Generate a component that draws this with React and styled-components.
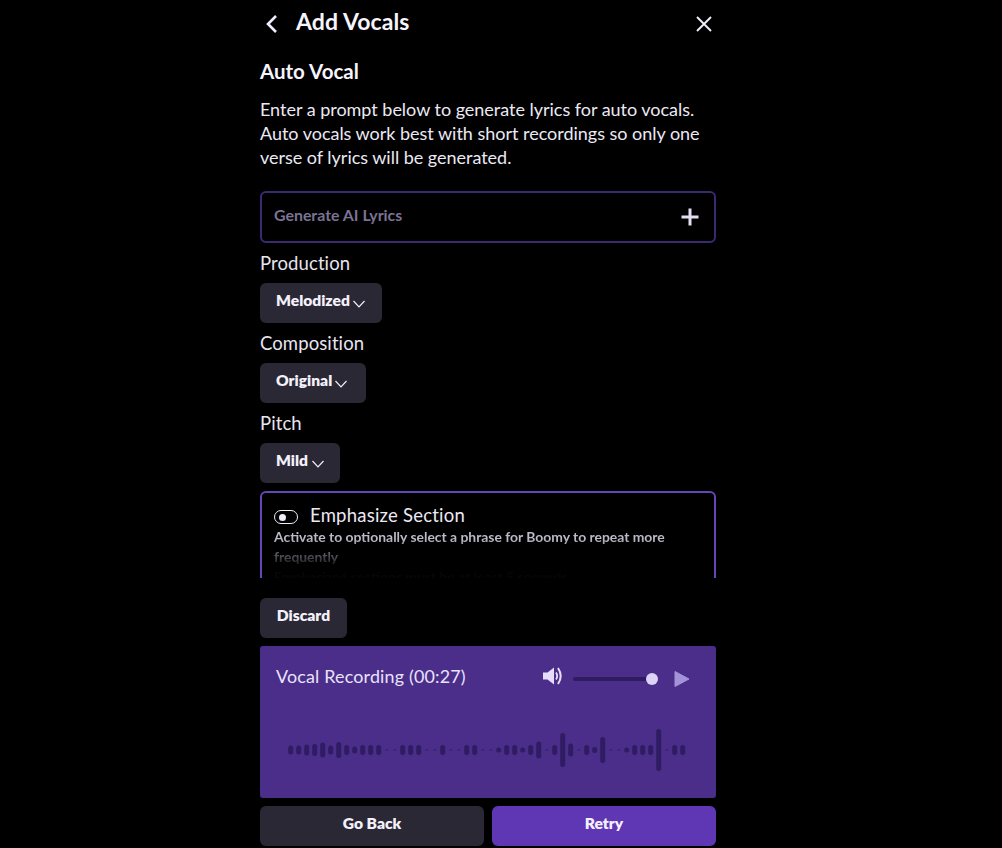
import React from "react";
import styled, { createGlobalStyle } from "styled-components";

const Global = createGlobalStyle`
  html, body { margin: 0; padding: 0; background: #000; }
  body { font-family: "Lato", "Noto Sans", sans-serif; color: #f1eefb; }
  * { box-sizing: border-box; }
`;

const Page = styled.div`
  width: 1002px;
  height: 848px;
  overflow: hidden;
  background: #000;
  padding-left: 260px;
`;
const Column = styled.main`
  width: 456px;
  display: flex;
  flex-direction: column;
`;
const Header = styled.header`
  height: 44px;
  display: flex;
  align-items: center;
  justify-content: space-between;
`;
const HeaderLeft = styled.div`
  display: flex;
  align-items: center;
  gap: 15px;
  padding-left: 3px;
`;
const IconButton = styled.span`
  display: inline-flex;
  color: #f1eefb;
  margin-top: ${(p) => p.$mt || 0}px;
`;
const Title = styled.h1`
  margin: -2px 0 0;
  font-size: 23px;
  line-height: 44px;
  font-weight: 700;
  letter-spacing: 0.1px;
  color: #f6f4fc;
`;
const Subtitle = styled.h2`
  margin: 13px 0 0;
  font-size: 20.5px;
  line-height: 28px;
  font-weight: 700;
  color: #f6f4fc;
`;
const Lead = styled.p`
  margin: 12px 0 0;
  font-size: 18px;
  line-height: 24px;
  font-weight: 400;
  letter-spacing: -0.02px;
  color: #ece9f5;
  white-space: nowrap;
`;
const PromptBox = styled.div`
  margin-top: 22px;
  height: 52px;
  border: 2px solid #3b2a72;
  border-radius: 6px;
  display: flex;
  align-items: center;
  justify-content: space-between;
  padding: 0 14px 0 12px;
`;
const PromptText = styled.span`
  font-size: 15.9px;
  font-weight: 700;
  color: #7b7394;
  margin-top: -5px;
`;
const FieldLabel = styled.div`
  margin-top: 8px;
  height: 32px;
  line-height: 24px;
  font-size: 18.5px;
  letter-spacing: 0.1px;
  color: #e8e5f0;
`;
const Pill = styled.button`
  display: flex;
  align-items: center;
  height: 40px;
  width: ${(p) => p.$w}px;
  padding: 0 0 6px 16px;
  gap: ${(p) => p.$gap || 2}px;
  border: 0;
  border-radius: 6px;
  background: #2a2834;
  color: #f4f1fb;
  font: 800 15.6px "Lato", sans-serif;
  white-space: nowrap;
`;
const Chevron = styled.svg`
  margin-top: 7px;
  flex: none;
`;
const EmphasizeWrap = styled.section`
  margin-top: 8px;
  height: 87px;
  overflow: hidden;
`;
const EmphasizeBox = styled.div`
  height: 110px;
  border: 2px solid #6546b8;
  border-radius: 6px;
  padding: 10px 12px;
`;
const ToggleRow = styled.div`
  display: flex;
  align-items: center;
  gap: 12px;
  height: 24px;
`;
const Toggle = styled.span`
  width: 24px;
  height: 14px;
  margin-top: 4px;
  border: 1.5px solid #f1eefb;
  border-radius: 8px;
  display: flex;
  align-items: center;
  padding-left: 4px;
  &::before {
    content: "";
    width: 7px;
    height: 7px;
    border-radius: 50%;
    background: #f1eefb;
  }
`;
const ToggleLabel = styled.span`
  font-size: 18.5px;
  letter-spacing: 0.23px;
  color: #ece9f5;
`;
const Hint = styled.div`
  font-size: 13.9px;
  line-height: 20px;
  font-weight: 700;
  color: #bdb9c8;
  -webkit-mask-image: linear-gradient(#000 0, #000 12px, rgba(0,0,0,.45) 28px, rgba(0,0,0,.03) 42px);
  mask-image: linear-gradient(#000 0, #000 12px, rgba(0,0,0,.45) 28px, rgba(0,0,0,.03) 42px);
`;
const DiscardButton = styled.button`
  margin-top: 20px;
  width: 87px;
  height: 40px;
  padding: 0 0 6px;
  border: 0;
  border-radius: 6px;
  background: #2a2834;
  color: #f4f1fb;
  font: 800 15.6px "Lato", sans-serif;
`;
const RecordingCard = styled.section`
  margin-top: 8px;
  height: 152px;
  border-radius: 3px;
  background: #4b2e8a;
  padding: 16px;
  display: flex;
  flex-direction: column;
`;
const CardTop = styled.div`
  display: flex;
  align-items: center;
  height: 32px;
`;
const CardTitle = styled.span`
  flex: 1;
  margin-top: -5px;
  font-size: 17.9px;
  letter-spacing: 0.18px;
  color: #e9e2fb;
`;
const VolumeIcon = styled.svg`
  margin: -5px 0 0 0;
  flex: none;
`;
const Slider = styled.div`
  width: 85px;
  height: 4px;
  margin: 2px 0 0 10px;
  border-radius: 2px;
  background: #301c63;
  position: relative;
`;
const Thumb = styled.span`
  position: absolute;
  right: 0;
  top: -4px;
  width: 12px;
  height: 12px;
  border-radius: 50%;
  background: #dcd3f6;
`;
const PlayIcon = styled.svg`
  margin: 2px 10px 0 16px;
  flex: none;
`;
const Wave = styled.svg`
  display: block;
  flex: none;
  margin-top: 34px;
`;
const Actions = styled.div`
  margin-top: 8px;
  display: grid;
  grid-template-columns: 1fr 1fr;
  gap: 8px;
`;
const ActionButton = styled.button`
  height: 40px;
  padding: 0 0 6px;
  border: 0;
  border-radius: 6px;
  background: ${(p) => (p.$primary ? "#5f36b3" : "#2a2834")};
  color: #f4f1fb;
  font: 800 15.6px "Lato", sans-serif;
`;

const heights = [8,8,10,11,14,8,15,9,6,9,9,9,1,1,9,9,9,1,1,9,1,1,9,9,1,1,4,9,9,4,9,16,1,9,33,12,1,9,5,25,1,1,4,9,9,9,41,1,9,9];

const Down = () => (
  <Chevron width="14" height="8" viewBox="0 0 14 8" fill="none" stroke="#f1eefb" strokeWidth="1.2">
    <path d="M1.5 1l5.5 5.8L12.5 1" />
  </Chevron>
);

export default function App() {
  return (
    <Page>
      <Global />
      <Column>
        <Header>
          <HeaderLeft>
            <IconButton $mt={4}>
              <svg width="18" height="20" viewBox="0 0 18 20" fill="none" stroke="currentColor" strokeWidth="2.6">
                <path d="M13 2L5 10l8 8" />
              </svg>
            </IconButton>
            <Title>Add Vocals</Title>
          </HeaderLeft>
          <IconButton $mt={4}>
            <svg width="24" height="24" viewBox="0 0 24 24" fill="none" stroke="currentColor" strokeWidth="1.9">
              <path d="M5 5l14 14M19 5L5 19" />
            </svg>
          </IconButton>
        </Header>
        <Subtitle>Auto Vocal</Subtitle>
        <Lead>
          Enter a prompt below to generate lyrics for auto vocals.
          <br />
          Auto vocals work best with short recordings so only one
          <br />
          verse of lyrics will be generated.
        </Lead>
        <PromptBox>
          <PromptText>Generate AI Lyrics</PromptText>
          <svg width="20" height="20" viewBox="0 0 20 20" fill="none" stroke="#e4def5" strokeWidth="3">
            <path d="M10 1.5v17M1.5 10h17" />
          </svg>
        </PromptBox>
        <FieldLabel>Production</FieldLabel>
        <Pill $w={122}>Melodized<Down /></Pill>
        <FieldLabel>Composition</FieldLabel>
        <Pill $w={106}>Original<Down /></Pill>
        <FieldLabel>Pitch</FieldLabel>
        <Pill $w={80} $gap={3}>Mild<Down /></Pill>
        <EmphasizeWrap>
          <EmphasizeBox>
            <ToggleRow>
              <Toggle />
              <ToggleLabel>Emphasize Section</ToggleLabel>
            </ToggleRow>
            <Hint>
              Activate to optionally select a phrase for Boomy to repeat more frequently
              <br />
              Emphasized sections must be at least 5 seconds
            </Hint>
          </EmphasizeBox>
        </EmphasizeWrap>
        <DiscardButton>Discard</DiscardButton>
        <RecordingCard>
          <CardTop>
            <CardTitle>Vocal Recording (00:27)</CardTitle>
            <VolumeIcon width="20" height="20" viewBox="0 0 20 20">
              <path d="M0 6.5h4.5L11 1.5v17l-6.5-5H0z" fill="#e6def9" />
              <path d="M13 6.5q2.4 3.5 0 7" fill="none" stroke="#e6def9" strokeWidth="1.8" />
              <path d="M15 2q5.4 8 0 16" fill="none" stroke="#e6def9" strokeWidth="2" />
            </VolumeIcon>
            <Slider><Thumb /></Slider>
            <PlayIcon width="16" height="18" viewBox="0 0 16 18">
              <path d="M1 1.5v15L15 9z" fill="#a593d9" stroke="#a593d9" strokeLinejoin="round" />
            </PlayIcon>
          </CardTop>
          <Wave width="424" height="44" viewBox="0 0 424 44">
            {heights.map((h, i) => (
              <rect
                key={i}
                x={(h === 1 ? 13.2 : 12.2) + 8 * i}
                y={22 - (h === 1 ? 1 : h + 1) / 2}
                width={h === 1 ? 3 : 5}
                height={h === 1 ? 1 : h + 1}
                rx={h === 1 ? 0.5 : 2.5}
                fill="#301c63"
              />
            ))}
          </Wave>
        </RecordingCard>
        <Actions>
          <ActionButton>Go Back</ActionButton>
          <ActionButton $primary>Retry</ActionButton>
        </Actions>
      </Column>
    </Page>
  );
}
